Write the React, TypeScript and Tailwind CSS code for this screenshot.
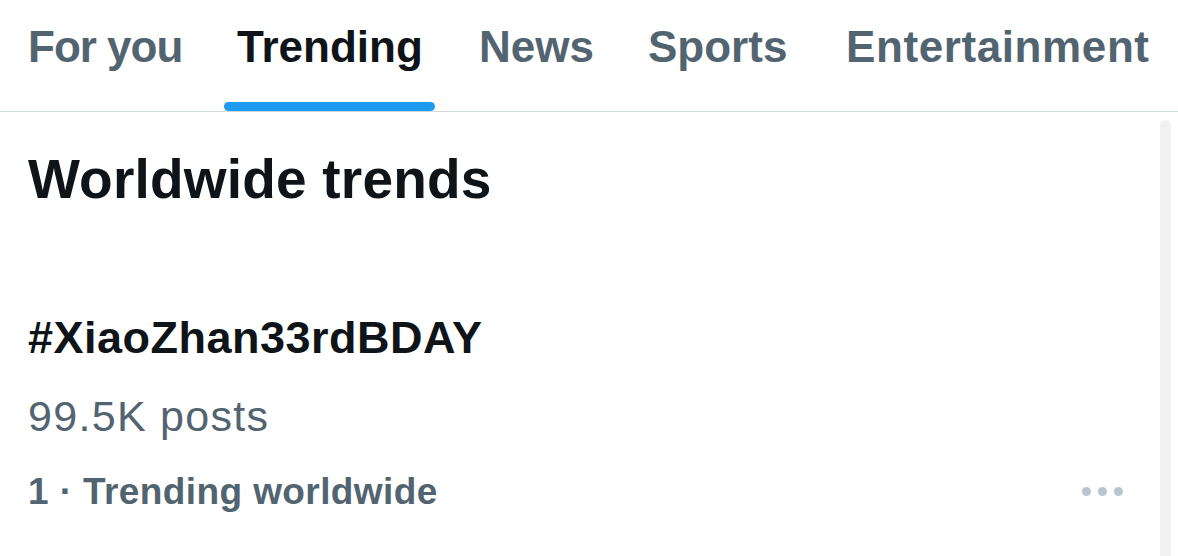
import React from "react";

const tabs = ["For you", "Trending", "News", "Sports", "Entertainment"];

export default function App() {
  return (
    <div
      className="w-[1178px] h-[556px] bg-white overflow-hidden flex flex-col"
      style={{ fontFamily: '"Liberation Sans", Arial, sans-serif' }}
    >
      <div className="h-[111px] grid grid-cols-[209px_242px_169px_198px_1fr] pl-[28px] border-b border-[#cfd9de] box-content shrink-0">
        {tabs.map((t) => (
          <div key={t} className="relative h-full pt-[25px]">
            <span
              className={`block text-[44px] leading-[44px] font-bold whitespace-nowrap ${
                t === "Trending" ? "text-[#0f1419]" : "text-[#536471]"
              } ${t === "Entertainment" ? "tracking-[0.6px]" : ""} ${
                t === "For you" ? "tracking-[-1px]" : ""
              }`}
            >
              {t}
            </span>
            {t === "Trending" && (
              <div className="absolute bottom-0 left-[-13px] w-[211px] h-[9px] rounded-full bg-[#1d9bf0]" />
            )}
          </div>
        ))}
      </div>
      <div className="flex flex-1 min-h-0">
        <div className="flex-1 pl-[28px] pr-[37px]">
          <div className="mt-[40px] text-[55px] leading-[55px] font-bold text-[#0f1419] tracking-[0.2px]">
            Worldwide trends
          </div>
          <div className="mt-[108px] text-[45px] leading-[45px] font-bold text-[#0f1419] tracking-[0.5px]">
            #XiaoZhan33rdBDAY
          </div>
          <div className="mt-[35px] text-[43px] leading-[43px] text-[#536471] tracking-[1.3px]">
            99.5K posts
          </div>
          <div className="mt-[35px] flex items-center justify-between">
            <span className="text-[37px] leading-[37px] font-bold text-[#536471] tracking-[0.4px]">
              1 · Trending worldwide
            </span>
            <div className="flex gap-[7px]">
              <span className="w-[9px] h-[9px] rounded-full bg-[#b8c5ce]" />
              <span className="w-[9px] h-[9px] rounded-full bg-[#b8c5ce]" />
              <span className="w-[9px] h-[9px] rounded-full bg-[#b8c5ce]" />
            </div>
          </div>
        </div>
        <div className="w-[11px] mt-[8px] mr-[7px] rounded-t-full bg-[#f1f1f1]" />
      </div>
    </div>
  );
}
